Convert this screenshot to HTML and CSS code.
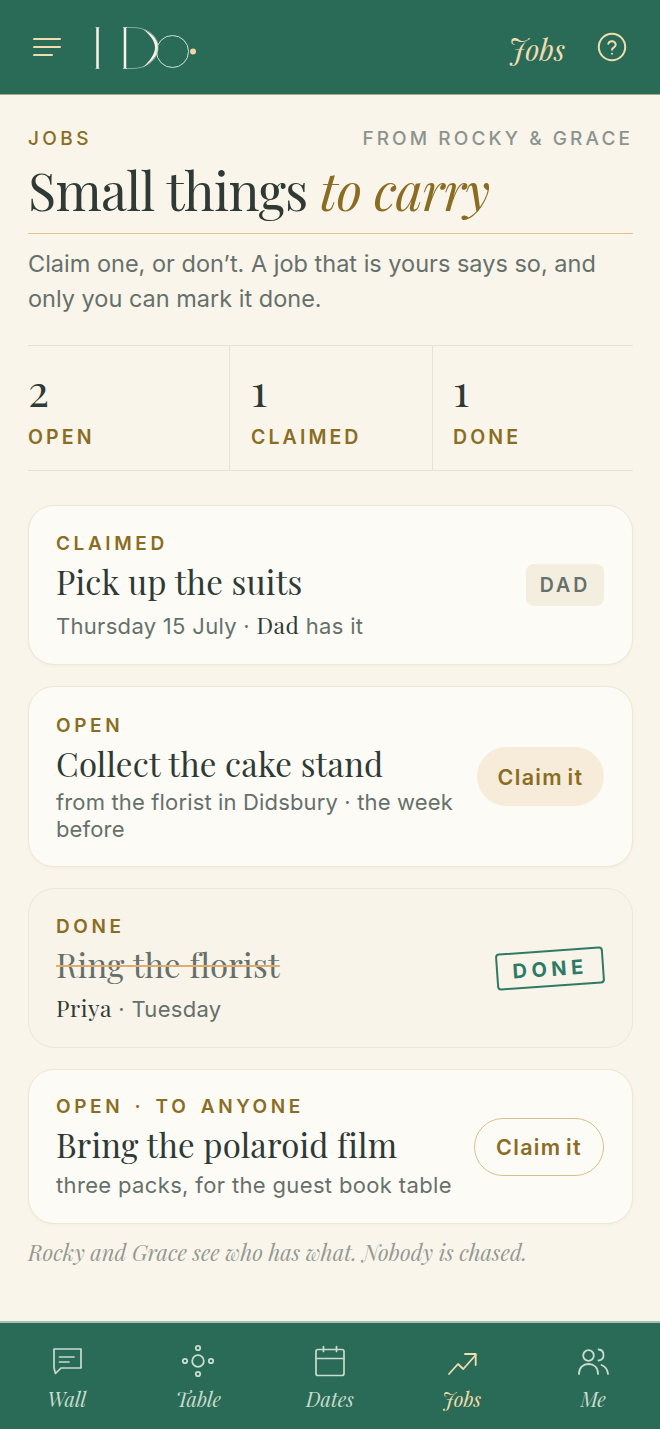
FILE: index.html
```html
<!DOCTYPE html>
<html lang="en">
<head>
<meta charset="utf-8">
<title>Jobs</title>
<link rel="stylesheet" href="styles.css">
</head>
<body>
<div class="app">
  <header class="top">
    <div class="top-left">
      <svg class="menu" width="28" height="20" viewBox="0 0 28 20" fill="none" stroke="#f1dcae" stroke-width="2" stroke-linecap="round"><path d="M1 2h26M1 10h26M1 18h18"/></svg>
      <svg class="logo" width="104" height="44" viewBox="0 0 104 44" fill="none">
        <path d="M2.500 2v40M30 2v40" stroke="#f8f3e8" stroke-width="2.500"/>
        <path d="M.5 1.500h4M.5 42.500h4M28 1.500h4M28 42.500h4" stroke="#f8f3e8" stroke-width=".7"/>
        <path d="M30 1.500h7c15 0 26 8 26 20s-11 21-26 21h-7" stroke="#dfeade" stroke-width=".5"/>
        <path d="M48 3C58 8 63 14 63 21.500S58 35 47 42C55 35 60 28 60 21.500S55 9 48 3z" fill="#f8f3e8"/>
        <circle cx="77.500" cy="25.500" r="16" stroke="#cfe3d4" stroke-width="1"/>
        <circle cx="98" cy="25.500" r="3" fill="#f1d5a5"/>
      </svg>
    </div>
    <div class="top-right">
      <span class="top-title">Jobs</span>
      <svg width="30" height="30" viewBox="0 0 30 30" fill="none" stroke="#f1dcae" stroke-width="2" stroke-linecap="round" stroke-linejoin="round"><circle cx="15" cy="15" r="13.200"/><path d="M11.300 11.800a3.800 3.800 0 0 1 7.400 1c0 2.500-3.700 3-3.700 5"/><path d="M15 21.700h.01"/></svg>
    </div>
  </header>

  <main class="main">
    <div class="eyebrow-row">
      <span class="eyebrow">JOBS</span>
      <span class="from">FROM ROCKY &amp; GRACE</span>
    </div>
    <h1 class="headline">Small things <em>to carry</em></h1>
    <p class="intro">Claim one, or don’t. A job that is yours says so, and only you can mark it done.</p>

    <section class="stats">
      <div class="stat"><div class="num">2</div><div class="lab">OPEN</div></div>
      <div class="stat"><div class="num">1</div><div class="lab">CLAIMED</div></div>
      <div class="stat"><div class="num">1</div><div class="lab">DONE</div></div>
    </section>

    <section class="cards">
      <article class="card c1">
        <div class="body">
          <div class="tag">CLAIMED</div>
          <h2 class="title">Pick up the suits</h2>
          <p class="sub">Thursday 15 July · <span class="serif">Dad</span> has it</p>
        </div>
        <span class="who">DAD</span>
      </article>
      <article class="card c2">
        <div class="body">
          <div class="tag">OPEN</div>
          <h2 class="title">Collect the cake stand</h2>
          <p class="sub tight">from the florist in Didsbury · the week before</p>
        </div>
        <button class="claim fill">Claim it</button>
      </article>
      <article class="card c3 done">
        <div class="body">
          <div class="tag">DONE</div>
          <h2 class="title struck">Ring the florist</h2>
          <p class="sub"><span class="serif">Priya</span> · Tuesday</p>
        </div>
        <span class="stamp">DONE</span>
      </article>
      <article class="card c4">
        <div class="body">
          <div class="tag">OPEN · TO ANYONE</div>
          <h2 class="title">Bring the polaroid film</h2>
          <p class="sub near">three packs, for the guest book table</p>
        </div>
        <button class="claim line">Claim it</button>
      </article>
    </section>

    <p class="foot">Rocky and Grace see who has what. Nobody is chased.</p>
  </main>

  <nav class="nav">
    <a class="item">
      <svg width="30" height="30" viewBox="0 0 30 30" fill="none" stroke="currentColor" stroke-width="1.700" stroke-linejoin="round" stroke-linecap="round"><path d="M2 3h27v19H9l-5.500 5.500L2 22z"/><path d="M7.500 11h14.500M7.500 16h9.500"/></svg>
      <span>Wall</span>
    </a>
    <a class="item">
      <svg width="34" height="34" viewBox="0 0 34 34" fill="none" stroke="currentColor" stroke-width="1.800"><circle cx="17" cy="17" r="5.800"/><circle cx="17" cy="4" r="2.200"/><circle cx="17" cy="30" r="2.200"/><circle cx="4" cy="17" r="2.200"/><circle cx="30" cy="17" r="2.200"/></svg>
      <span>Table</span>
    </a>
    <a class="item">
      <svg width="32" height="32" viewBox="0 0 32 32" fill="none" stroke="currentColor" stroke-width="1.700" stroke-linecap="round" stroke-linejoin="round"><rect x="2" y="4.500" width="28" height="26" rx="2"/><path d="M2 13.500h28M9.500 1.500v5M22.500 1.500v5"/></svg>
      <span>Dates</span>
    </a>
    <a class="item active">
      <svg width="30" height="30" viewBox="0 0 30 30" fill="none" stroke="currentColor" stroke-width="1.800" stroke-linecap="round" stroke-linejoin="round"><path d="M2 28l9-10 5.300 5L28.700 9"/><path d="M18 8h10.700v11"/></svg>
      <span>Jobs</span>
    </a>
    <a class="item">
      <svg width="32" height="32" viewBox="0 0 32 32" fill="none" stroke="currentColor" stroke-width="1.800" stroke-linecap="round"><circle cx="11.500" cy="10.500" r="5.300"/><path d="M2 29c0-6.500 4-10 9.500-10S21 22.500 21 29"/><path d="M21.500 4.500c3 .2 5 2.500 5 5.500s-2 5.300-5 5.500M24.500 20c3.800 1.500 6 4.800 6.500 9"/></svg>
      <span>Me</span>
    </a>
  </nav>
</div>
</body>
</html>
```
FILE: styles.css
```css
* { box-sizing: border-box; }
html, body { margin: 0; padding: 0; }
body {
  background: #faf5eb;
  font-family: Inter, "Liberation Sans", sans-serif;
  color: #2f3a35;
}
.app {
  width: 660px;
  height: 1429px;
  display: flex;
  flex-direction: column;
  overflow: hidden;
}
.top {
  height: 95px;
  flex: none;
  background: #2a6b58;
  border-bottom: 1px solid #a8a98a;
  display: flex;
  align-items: center;
  justify-content: space-between;
  padding: 0 33px;
}
.top-left { display: flex; align-items: center; gap: 34px; }
.logo { margin-top: 1px; }
.top-right { display: flex; align-items: center; gap: 32px; }
.top-title {
  margin-top: 3px;
  font-family: "Playfair Display", "Liberation Serif", serif;
  font-style: italic;
  font-size: 29px;
  color: #f1dcae;
}
.main {
  flex: 1;
  padding: 31px 27px 0 28px;
}
.eyebrow-row {
  display: flex;
  justify-content: space-between;
  align-items: baseline;
}
.eyebrow {
  font-size: 19px;
  font-weight: 500;
  letter-spacing: 3.400px;
  color: #8a6d22;
  line-height: 26px;
}
.from {
  font-size: 19px;
  font-weight: 500;
  letter-spacing: 3.100px;
  color: #8c938d;
  line-height: 26px;
}
.headline {
  margin: 6px 0 0;
  padding-bottom: 11px;
  font-family: "Playfair Display", "Liberation Serif", serif;
  font-weight: 400;
  font-size: 52px;
  line-height: 64px;
  letter-spacing: -.65px;
  color: #2f3a35;
  border-bottom: 1px solid #e6c084;
  white-space: nowrap;
}
.headline em { color: #8a6d22; font-style: italic; }
.intro {
  margin: 13px 0 0;
  font-size: 23.500px;
  line-height: 34.500px;
  color: #66706a;
  width: 590px;
}
.stats {
  margin-top: 29px;
  height: 126px;
  display: grid;
  grid-template-columns: 201px 203px 1fr;
  border-top: 1px solid #e9e2d1;
  border-bottom: 1px solid #e9e2d1;
}
.stat { padding: 20px 0 0 21px; border-left: 1px solid #e9e2d1; }
.stat:first-child { padding-left: 0; border-left: 0; }
.stat:last-child { padding-left: 20px; }
.num {
  font-family: "Playfair Display", "Liberation Serif", serif;
  font-size: 44px;
  line-height: 46px;
  color: #2f3a35;
}
.lab {
  margin-top: 12px;
  font-size: 19.500px;
  font-weight: 600;
  letter-spacing: 3.100px;
  line-height: 26px;
  color: #8a6d22;
}
.cards {
  margin-top: 34px;
  display: flex;
  flex-direction: column;
  gap: 21px;
}
.card {
  display: flex;
  align-items: center;
  justify-content: space-between;
  background: #fdfbf6;
  border: 1.500px solid #efe7d6;
  border-radius: 26px;
  padding: 0 28px 0 27px;
  box-shadow: 0 1px 3px rgba(90, 70, 30, .05);
}
.c1, .c3 { height: 160px; }
.c2 { height: 181px; }
.c4 { height: 155px; }
.done { background: #f9f4e9; box-shadow: none; }
.body { flex: 1; min-width: 0; padding-top: 2px; }
.tag {
  font-size: 19px;
  font-weight: 600;
  letter-spacing: 3.600px;
  word-spacing: 3px;
  line-height: 26px;
  color: #8a6d22;
}
.title {
  margin: 2px 0 0;
  font-family: "Playfair Display", "Liberation Serif", serif;
  font-weight: 400;
  font-size: 33px;
  letter-spacing: .2px;
  line-height: 44px;
  color: #2f3a35;
  white-space: nowrap;
}
.struck {
  color: #66706a;
  text-decoration: line-through;
  text-decoration-color: #dcae70;
  text-decoration-thickness: 2px;
}
.sub {
  margin: 6px 0 0;
  font-size: 22px;
  line-height: 32px;
  letter-spacing: .3px;
  color: #66706a;
}
.tight { margin-top: 4px; line-height: 27px; letter-spacing: .15px; }
.near { margin-top: 3px; letter-spacing: .35px; }
.serif {
  font-family: "Playfair Display", "Liberation Serif", serif;
  font-size: 23px;
  color: #2f3a35;
  letter-spacing: .5px;
}
.who {
  flex: none;
  width: 78px;
  height: 42px;
  display: flex;
  align-items: center;
  justify-content: center;
  background: #f4eee0;
  border-radius: 8px;
  font-size: 19.500px;
  font-weight: 600;
  letter-spacing: 3px;
  color: #66706a;
}
.claim {
  flex: none;
  font-family: inherit;
  font-size: 21.500px;
  font-weight: 600;
  letter-spacing: 1.300px;
  word-spacing: -2px;
  color: #8a6d22;
  border-radius: 30px;
  padding: 0;
}
.fill {
  width: 127px;
  height: 59px;
  background: #f6ecd9;
  border: 0;
}
.line {
  width: 130px;
  height: 58px;
  background: transparent;
  border: 1.500px solid #d9bf8a;
}
.stamp {
  flex: none;
  width: 108px;
  height: 37px;
  display: flex;
  align-items: center;
  justify-content: center;
  border: 2px solid #2f7a65;
  border-radius: 4px;
  transform: rotate(-4deg);
  font-size: 20px;
  font-weight: 700;
  letter-spacing: 4.500px;
  color: #2f7a65;
}
.foot {
  margin: 13px 0 0;
  font-family: "Playfair Display", "Liberation Serif", serif;
  font-style: italic;
  font-size: 22px;
  line-height: 30px;
  color: #949a93;
}
.nav {
  flex: none;
  height: 108px;
  background: #2a6b58;
  border-top: 2px solid #a9bfb0;
  display: grid;
  grid-template-columns: repeat(5, 1fr);
  padding: 0 1px;
}
.item {
  display: flex;
  flex-direction: column;
  align-items: center;
  color: #c9dccd;
  padding-top: 21px;
}
.item svg { height: 34px; }
.item span {
  margin-top: 8px;
  font-family: "Playfair Display", "Liberation Serif", serif;
  font-style: italic;
  font-size: 20px;
  line-height: 26px;
}
.active { color: #f1dcae; }
```
